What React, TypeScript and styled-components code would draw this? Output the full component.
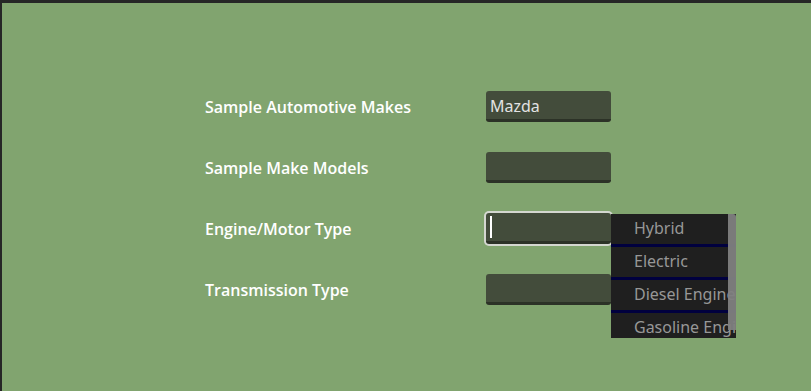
import React from "react";
import styled, { createGlobalStyle } from "styled-components";

const Global = createGlobalStyle`
  html, body { margin: 0; padding: 0; background: #262626; }
  body { padding: 3px 0 0 2px; overflow: hidden; }
`;

const Canvas = styled.div`
  background: #81a46f;
  height: 388px;
  width: 809px;
  box-sizing: border-box;
  padding: 88px 0 0 203px;
`;

const Form = styled.div`
  display: grid;
  grid-template-columns: 281px 125px;
  grid-auto-rows: 31px;
  row-gap: 30px;
  align-items: center;
`;

const Label = styled.div`
  font-family: "Open Sans", sans-serif;
  font-weight: 600;
  font-size: 16px;
  color: #ffffff;
`;

const FieldWrap = styled.div`
  position: relative;
  height: 31px;
`;

const Field = styled.div<{ $focused?: boolean }>`
  box-sizing: border-box;
  height: 31px;
  width: 125px;
  background: #434c3b;
  border-radius: 3px;
  border-bottom: 3px solid #2c3227;
  box-shadow: ${(p) => (p.$focused ? "0 0 0 2px #d4d7d0" : "none")};
  font-family: "Noto Sans", sans-serif;
  font-size: 16px;
  color: #e2e2e2;
  padding: 2px 4px 0;
  display: flex;
  align-items: center;
`;

const Caret = styled.span`
  display: block;
  width: 2px;
  height: 22px;
  margin-top: -2px;
  background: #ffffff;
`;

const Dropdown = styled.div`
  position: absolute;
  left: 125px;
  top: 1px;
  width: 125px;
  height: 124px;
  background: #1f1f1f;
  overflow: hidden;
`;

const Option = styled.div`
  box-sizing: border-box;
  height: 33px;
  border-bottom: 3px solid #00003e;
  padding: 0 0 2px 23px;
  display: flex;
  align-items: center;
  font-family: "Noto Sans", sans-serif;
  font-size: 16px;
  color: #979797;
  white-space: nowrap;
`;

const Thumb = styled.div`
  position: absolute;
  right: 0;
  top: 0;
  width: 8px;
  height: 116px;
  background: rgba(128, 128, 128, 0.95);
  border-radius: 0 3px 0 0;
`;

const rows = [
  { label: "Sample Automotive Makes", value: "Mazda" },
  { label: "Sample Make Models", value: "" },
  { label: "Engine/Motor Type", value: "", focused: true },
  { label: "Transmission Type", value: "" },
];

const options = ["Hybrid", "Electric", "Diesel Engine", "Gasoline Engine"];

export default function App() {
  return (
    <>
      <Global />
      <Canvas>
        <Form>
          {rows.map((r) => (
            <React.Fragment key={r.label}>
              <Label>{r.label}</Label>
              <FieldWrap>
                <Field $focused={r.focused}>
                  {r.focused ? <Caret /> : r.value}
                </Field>
                {r.focused && (
                  <Dropdown>
                    {options.map((o) => (
                      <Option key={o}>{o}</Option>
                    ))}
                    <Thumb />
                  </Dropdown>
                )}
              </FieldWrap>
            </React.Fragment>
          ))}
        </Form>
      </Canvas>
    </>
  );
}
